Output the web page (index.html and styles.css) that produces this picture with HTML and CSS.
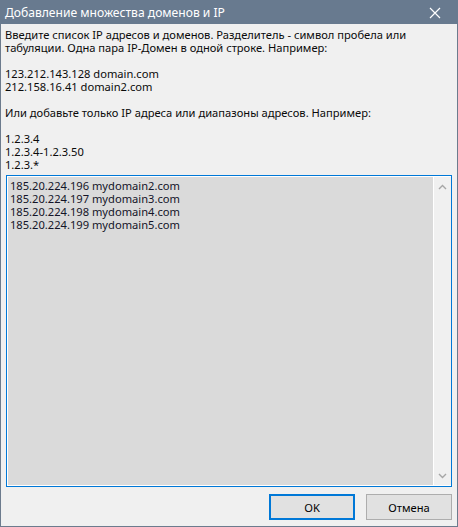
FILE: index.html
```html
<!DOCTYPE html>
<html lang="ru">

<head>
    <meta charset="UTF-8">
    <meta name="viewport" content="width=device-width, initial-scale=1.0">
    <title>Добавление множества доменов и IP</title>
    <link rel="stylesheet" href="styles.css">
</head>

<body>
    <div class="window">
        <div class="titlebar">
            <div class="title">Добавление множества доменов и IP</div>
            <div class="close">
                <svg width="12" height="12" viewBox="0 0 12 12">
                    <path d="M1 1 L11 11 M11 1 L1 11" stroke="#fff" stroke-width="1.2" fill="none" />
                </svg>
            </div>
        </div>
        <div class="content">
            <div class="hint">
                <div>Введите список IP адресов и доменов. Разделитель - символ пробела или</div>
                <div>табуляции. Одна пара IP-Домен в одной строке. Например:</div>
                <div>&nbsp;</div>
                <div>123.212.143.128 domain.com</div>
                <div>212.158.16.41 domain2.com</div>
                <div>&nbsp;</div>
                <div>Или добавьте только IP адреса или диапазоны адресов. Например:</div>
                <div>&nbsp;</div>
                <div>1.2.3.4</div>
                <div>1.2.3.4-1.2.3.50</div>
                <div>1.2.3.*</div>
            </div>
            <div class="list">
                <div class="items">
                    <div>185.20.224.196 mydomain2.com</div>
                    <div>185.20.224.197 mydomain3.com</div>
                    <div>185.20.224.198 mydomain4.com</div>
                    <div>185.20.224.199 mydomain5.com</div>
                </div>
                <div class="scroll">
                    <svg width="9" height="6" viewBox="0 0 9 6">
                        <path d="M1 5 L4.5 1.5 L8 5" stroke="#a6a6a6" stroke-width="1.4" fill="none" />
                    </svg>
                    <svg width="9" height="6" viewBox="0 0 9 6">
                        <path d="M1 1 L4.5 4.5 L8 1" stroke="#a6a6a6" stroke-width="1.4" fill="none" />
                    </svg>
                </div>
            </div>
            <div class="buttons">
                <button class="btn default">OK</button>
                <button class="btn">Отмена</button>
            </div>
        </div>
    </div>
</body>

</html>
```

FILE: styles.css
```css
* {
    box-sizing: border-box;
}

body {
    margin: 0;
    background-color: #f0f0f0;
    font-family: "Noto Sans", sans-serif;
    font-size: 11.15px;
    color: #000;
}

.window {
    width: 458px;
    height: 527px;
    border: 1px solid #6c7b8d;
    border-top: none;
    display: flex;
    flex-direction: column;
    background-color: #f0f0f0;
}

.titlebar {
    height: 24px;
    margin: 0 -1px;
    background-color: #687a8f;
    display: flex;
    align-items: center;
    justify-content: space-between;
    color: #fff;
    font-size: 12.1px;
}

.title {
    padding-left: 5px;
}

.close {
    width: 46px;
    height: 24px;
    display: flex;
    align-items: center;
    justify-content: center;
    padding-top: 1px;
}

.content {
    flex: 1;
    display: flex;
    flex-direction: column;
    padding: 4px 5px 6px 4px;
}

.hint {
    line-height: 13px;
    white-space: nowrap;
    color: #0a0a0a;
}

.list {
    margin: 4px 0 0 1px;
    height: 312px;
    border: 1px solid #0078d7;
    padding: 1px 0 1px 1px;
    background-color: #fff;
    display: flex;
    gap: 1px;
}

.items {
    flex: 1;
    background-color: #dadada;
    padding: 2px 2px;
    line-height: 13px;
    color: #141428;
}

.scroll {
    width: 17px;
    background-color: #f0f0f0;
    display: flex;
    flex-direction: column;
    justify-content: space-between;
    align-items: center;
    padding: 7px 0 6px;
}

.buttons {
    display: flex;
    justify-content: flex-end;
    gap: 11px;
    margin-top: 7px;
}

.btn {
    width: 86px;
    height: 26px;
    background-color: #e1e1e1;
    border: 1px solid #adadad;
    font-family: "Noto Sans", sans-serif;
    font-size: 11.15px;
    color: #000;
    padding: 0;
}

.default {
    border: 2px solid #0078d7;
}
```
